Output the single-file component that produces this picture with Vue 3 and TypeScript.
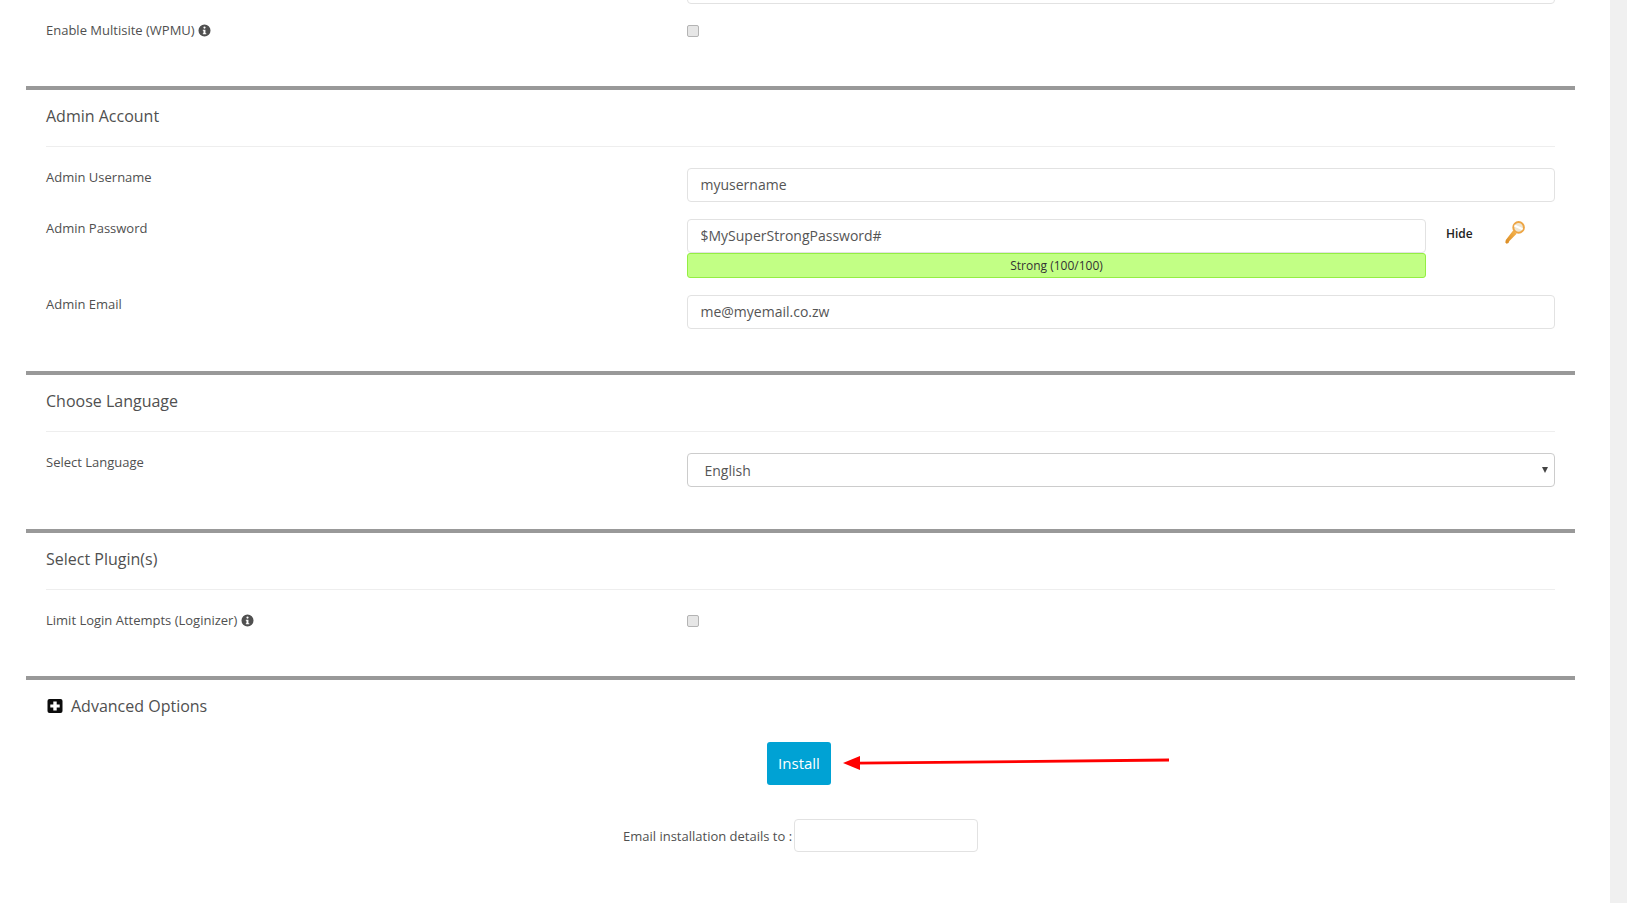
<script setup lang="ts">
import { ref } from 'vue'
const username = ref('myusername')
const password = ref('$MySuperStrongPassword#')
const email = ref('me@myemail.co.zw')
const infoPath = 'M7 .5a6.5 6.5 0 1 0 0 13 6.5 6.5 0 0 0 0-13zM7 2.6a1.2 1.2 0 1 1 0 2.4 1.2 1.2 0 0 1 0-2.4zM8.9 11H5.2V9.9h.7V7.2h-.7V6.1h2.8v3.8h.9z'
</script>

<template>
  <div class="page">
    <main class="content">
      <section class="section first">
        <div class="cut"><input class="field" type="text" aria-label="Previous field" /></div>
        <div class="row check-row">
          <label class="label">Enable Multisite (WPMU)
            <svg class="info" viewBox="0 0 14 14"><path :d="infoPath" fill-rule="evenodd" /></svg>
          </label>
          <div class="control"><input class="check" type="checkbox" /></div>
        </div>
      </section>

      <section class="section admin">
        <h3 class="heading">Admin Account</h3>
        <div class="row">
          <label class="label">Admin Username</label>
          <div class="control"><input v-model="username" class="field" type="text" /></div>
        </div>
        <div class="row">
          <label class="label">Admin Password</label>
          <div class="control pass-control">
            <div class="pass-main">
              <input v-model="password" class="field" type="text" />
              <div class="meter">Strong (100/100)</div>
            </div>
            <div class="pass-tools">
              <span class="hide">Hide</span>
              <svg class="key" viewBox="0 0 20 23">
                <defs>
                  <linearGradient id="keyGrad" x1="0" y1="1" x2="1" y2="0">
                    <stop offset="0" stop-color="#d98a22" />
                    <stop offset="1" stop-color="#f7b650" />
                  </linearGradient>
                </defs>
                <path d="M8.3 9.3 11.6 12.8 4.4 20l-.9 2-1.9.8L.3 21.4l.5-2.3z" fill="url(#keyGrad)" />
                <circle cx="13.6" cy="6.4" r="5.3" fill="#efe6d2" stroke="#eda544" stroke-width="2" />
                <path d="M9.4 4.6 17.6 8.2" stroke="#fff" stroke-width="2.2" />
              </svg>
            </div>
          </div>
        </div>
        <div class="row">
          <label class="label">Admin Email</label>
          <div class="control"><input v-model="email" class="field" type="text" /></div>
        </div>
      </section>

      <section class="section language">
        <h3 class="heading">Choose Language</h3>
        <div class="row">
          <label class="label">Select Language</label>
          <div class="control">
            <div class="select">
              <span>English</span>
              <i class="caret"></i>
            </div>
          </div>
        </div>
      </section>

      <section class="section plugins">
        <h3 class="heading">Select Plugin(s)</h3>
        <div class="row">
          <label class="label">Limit Login Attempts (Loginizer)
            <svg class="info" viewBox="0 0 14 14"><path :d="infoPath" fill-rule="evenodd" /></svg>
          </label>
          <div class="control"><input class="check" type="checkbox" /></div>
        </div>
      </section>

      <section class="section advanced">
        <div class="adv-title">
          <svg class="plus" viewBox="0 0 16 16">
            <rect x="0.5" y="1" width="15" height="14" rx="2" fill="#0c0c0c" />
            <path d="M6.3 3.4h3.4v3h3v3.2h-3v3H6.3v-3h-3V6.4h3z" fill="#fff" />
          </svg>
          <span>Advanced Options</span>
        </div>
        <div class="install-row">
          <button class="install" type="button">Install</button>
          <svg class="arrow" viewBox="0 0 327 16">
            <path d="M326 5 14 8.2" stroke="#f00" stroke-width="2.8" fill="none" />
            <path d="M0 8 17 1v14z" fill="#f00" />
          </svg>
        </div>
        <div class="mail-row">
          <label class="mail-label">Email installation details to :</label>
          <input class="field mail-field" type="text" />
        </div>
      </section>
    </main>
    <aside class="scrollbar"></aside>
  </div>
</template>

<style scoped>
.page {
  display: flex;
  height: 903px;
  overflow: hidden;
  background: #fff;
  font-family: "Open Sans", "Liberation Sans", sans-serif;
  color: #555;
}
.content {
  width: 1549px;
  margin-left: 26px;
  flex: none;
}
.scrollbar {
  width: 17px;
  margin-left: 35px;
  flex: none;
  background: #f0f0f0;
}
.section {
  padding: 0 20px;
}
.section + .section {
  border-top: 4px solid #999;
}
.cut {
  height: 4px;
  overflow: hidden;
  display: flex;
  justify-content: flex-end;
  align-items: flex-end;
}
.cut .field {
  width: 868px;
  flex: none;
}
.first { height: 86px; }
.admin { height: 281px; }
.language { height: 154px; }
.plugins { height: 143px; }
.heading {
  box-sizing: border-box;
  margin: 0 0 21px;
  height: 57px;
  line-height: 52px;
  font-size: 16px;
  font-weight: 500;
  color: #505050;
  border-bottom: 1px solid #eee;
}
.row {
  display: flex;
  margin-bottom: 17px;
}
.check-row { padding-top: 17px; }
.label {
  width: 641px;
  flex: none;
  font-size: 13px;
  font-weight: 500;
  line-height: 18px;
  color: #505050;
}
.info {
  width: 13px;
  height: 13px;
  fill: #505050;
  vertical-align: -2px;
}
.control {
  flex: 1;
  min-width: 0;
}
.field {
  display: block;
  box-sizing: border-box;
  width: 100%;
  height: 34px;
  padding: 0 12.5px 2px;
  border: 1px solid #e2e2e2;
  border-radius: 4px;
  background: #fff;
  font: 400 14px "Open Sans", "Liberation Sans", sans-serif;
  color: #555;
  outline: none;
}
.check {
  display: block;
  appearance: none;
  box-sizing: border-box;
  width: 12px;
  height: 12px;
  margin: 4px 0 0;
  border: 1px solid #b4b4b4;
  border-radius: 2px;
  background: #e6e6e6;
}
.pass-control {
  display: flex;
}
.pass-main {
  width: 739px;
  flex: none;
}
.meter {
  box-sizing: border-box;
  height: 25px;
  border: 1px solid #94ee44;
  border-radius: 3px;
  background: #c2ff85;
  font-size: 12px;
  line-height: 23px;
  text-align: center;
  color: #333;
}
.pass-tools {
  display: flex;
  align-items: flex-start;
  padding-left: 20px;
}
.hide {
  font-size: 12px;
  font-weight: 600;
  line-height: 16px;
  margin-top: 7px;
  color: #222;
}
.key {
  width: 20px;
  height: 23px;
  margin-left: 32px;
  margin-top: 2px;
}
.select {
  box-sizing: border-box;
  height: 34px;
  display: flex;
  align-items: center;
  justify-content: space-between;
  padding: 0 6px 0 16.5px;
  border: 1px solid #ccc;
  border-radius: 4px;
  font-size: 14px;
  color: #555;
}
.caret {
  width: 0;
  height: 0;
  border-left: 3px solid transparent;
  border-right: 3px solid transparent;
  border-top: 6px solid #444;
}
.adv-title {
  display: flex;
  align-items: center;
  gap: 8px;
  height: 52px;
  padding-left: 1px;
  font-size: 16px;
  font-weight: 500;
  color: #505050;
}
.plus {
  width: 16px;
  height: 16px;
}
.install-row {
  position: relative;
  display: flex;
  justify-content: flex-start;
  padding-left: 721px;
  margin-top: 10px;
}
.install {
  width: 64px;
  height: 43px;
  padding: 0 0 2px;
  border: 0;
  border-radius: 3px;
  background: #00a2d4;
  color: #fff;
  font: 500 15px "Open Sans", "Liberation Sans", sans-serif;
}
.arrow {
  position: absolute;
  left: 797px;
  top: 13px;
  width: 327px;
  height: 16px;
}
.mail-row {
  display: flex;
  align-items: center;
  margin-top: 34px;
  padding-left: 577px;
}
.mail-label {
  font-size: 13px;
  font-weight: 500;
  margin-right: 2px;
  color: #505050;
}
.mail-field {
  width: 184px;
  height: 33px;
}
</style>
